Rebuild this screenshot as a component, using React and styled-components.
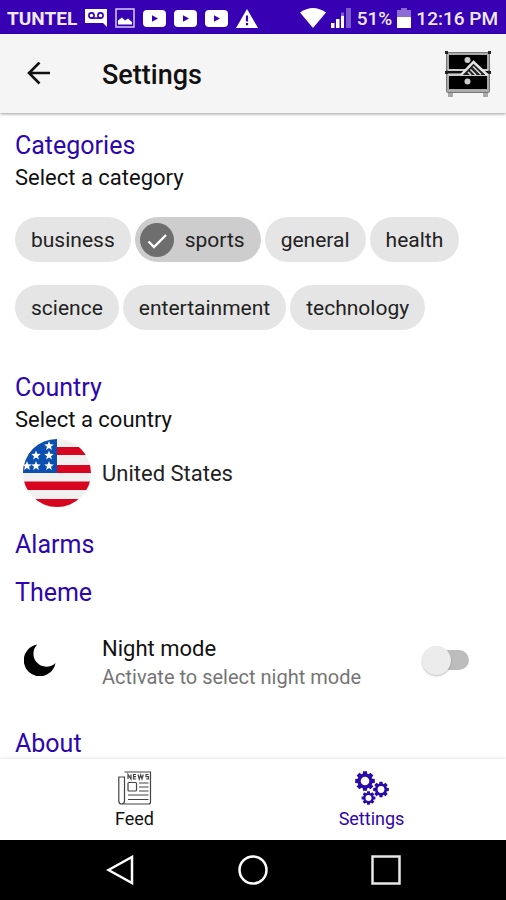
import React, { useState } from "react";
import styled, { createGlobalStyle } from "styled-components";

const primary = "#3700b3";
const accent = "#2d06b0";

const GlobalStyle = createGlobalStyle`
  * {
    box-sizing: border-box;
  }

  body {
    margin: 0;
    background-color: white;
    color: #111;
    font-family: Roboto, "Liberation Sans", sans-serif;
  }

  button {
    font-family: inherit;
  }

  svg {
    display: block;
    flex-shrink: 0;
  }
`;

const Screen = styled.div`
  display: flex;
  flex-direction: column;
  height: 100vh;
`;

const StatusBar = styled.div`
  display: flex;
  align-items: center;
  justify-content: space-between;
  height: 34px;
  flex-shrink: 0;
  padding: 2px 8px 0 7px;
  background-color: ${primary};
  color: #eee8fa;
  font-size: 19px;
  font-weight: 500;
`;

const StatusGroup = styled.div`
  display: flex;
  align-items: center;
  gap: ${(props) => props.$gap}px;
`;

const Carrier = styled.span`
  font-weight: 700;
`;

const AppBar = styled.header`
  display: flex;
  align-items: center;
  height: 79px;
  flex-shrink: 0;
  padding: 0 15px 0 22px;
  background-color: #f5f5f5;
  box-shadow: 0 1px 3px rgba(0, 0, 0, 0.4);
  z-index: 1;
`;

const IconButton = styled.button`
  display: flex;
  align-items: center;
  justify-content: center;
  width: 34px;
  height: 34px;
  padding: 0;
  border: none;
  background: none;
  cursor: pointer;
`;

const Title = styled.h1`
  flex: 1;
  margin: 0 0 0 46px;
  padding-top: 2px;
  font-size: 27px;
  line-height: 32px;
  font-weight: 500;
`;

const Main = styled.main`
  flex: 1;
  min-height: 0;
  overflow: hidden;
  padding: 17px 15px 0;
`;

const Section = styled.section`
  margin-bottom: ${(props) => props.$space}px;
`;

const Heading = styled.h2`
  margin: 0;
  color: ${accent};
  font-size: 25px;
  line-height: 32px;
  font-weight: 400;
`;

const Hint = styled.p`
  margin: 0;
  font-size: 22px;
  line-height: 32px;
`;

const Chips = styled.div`
  display: flex;
  flex-wrap: wrap;
  gap: 23px 4px;
  margin-top: 23px;
`;

const Chip = styled.button`
  display: flex;
  align-items: center;
  gap: 11px;
  height: 45px;
  padding: 0 16px 0 ${(props) => (props.$selected ? 5 : 16)}px;
  border: none;
  border-radius: 23px;
  background-color: ${(props) => (props.$selected ? "#cdcdcd" : "#e5e5e5")};
  color: #222;
  font-size: 21px;
  cursor: pointer;
`;

const CountryRow = styled.button`
  display: flex;
  align-items: center;
  gap: 11px;
  width: 100%;
  margin-top: 3px;
  padding: 0 8px;
  border: none;
  background: none;
  color: #222;
  font-size: 22px;
  text-align: left;
  cursor: pointer;
`;

const SettingRow = styled.div`
  display: flex;
  align-items: center;
  margin-top: 20px;
  padding: 0 22px 0 9px;
`;

const SettingLabel = styled.label`
  flex: 1;
  margin-left: 46px;
  padding-top: 6px;
  font-size: 22px;
  line-height: 28px;
`;

const SettingDetail = styled.span`
  display: block;
  color: #757575;
  font-size: 20px;
  line-height: 28px;
`;

const Switch = styled.input`
  appearance: none;
  display: flex;
  align-items: center;
  width: 47px;
  height: 30px;
  margin: 0;
  cursor: pointer;

  &::before {
    content: "";
    width: 29px;
    height: 29px;
    border-radius: 50%;
    background-color: #ececec;
    box-shadow: 0 1px 2px rgba(0, 0, 0, 0.25);
    z-index: 1;
  }

  &::after {
    content: "";
    width: 42px;
    height: 20px;
    margin-left: -24px;
    border-radius: 10px;
    background-color: #bdbdbd;
  }

  &:checked::before {
    order: 1;
    margin-left: -24px;
    background-color: ${primary};
  }

  &:checked::after {
    margin-left: 0;
  }
`;

const Tabs = styled.nav`
  display: flex;
  flex-shrink: 0;
  height: 81px;
  padding: 12px 16px 0;
  background-color: white;
  box-shadow: 0 -1px 3px rgba(0, 0, 0, 0.1);
  z-index: 1;
`;

const Tab = styled.a`
  display: flex;
  flex: 1;
  flex-direction: column;
  align-items: center;
  gap: 2px;
  color: ${(props) => (props.$active ? accent : "#111")};
  font-size: 18px;
  line-height: 24px;
  text-decoration: none;
`;

const SystemBar = styled.div`
  display: flex;
  align-items: center;
  justify-content: space-around;
  flex-shrink: 0;
  height: 60px;
  padding: 0 53px;
  background-color: black;
`;

const VoicemailIcon = () => (
  <svg width="22" height="18" viewBox="0 0 22 18">
    <path d="M0 0h22v18l-4-4H0z" fill="white" />
    <g fill="none" stroke={primary} strokeWidth="1.6">
      <circle cx="6.5" cy="6.5" r="2.6" />
      <circle cx="15.5" cy="6.5" r="2.6" />
      <path d="M6.5 9.1h9" />
    </g>
  </svg>
);

const PictureIcon = () => (
  <svg width="20" height="20" viewBox="0 0 20 20">
    <rect x="1" y="1" width="18" height="18" fill="none" stroke="#d9cdf2" strokeWidth="1.5" />
    <path d="M3 16.5v-4l4-3 3 3 3-2 4 3.5v2.5z" fill="white" />
  </svg>
);

const VideoIcon = () => (
  <svg width="23" height="17" viewBox="0 0 23 17">
    <rect width="23" height="17" rx="4" fill="white" />
    <path d="M9 5.2l6 3.3-6 3.3z" fill={primary} />
  </svg>
);

const WarningIcon = () => (
  <svg width="22" height="19" viewBox="0 0 22 19">
    <path d="M11 0l11 19H0z" fill="white" />
    <path d="M9.900 6.500h2.200v6H9.900zM9.900 14h2.200v2.300H9.900z" fill={primary} />
  </svg>
);

const WifiIcon = () => (
  <svg width="26" height="20" viewBox="0 0 26 20">
    <path d="M0 4.500Q13-4.500 26 4.500L13 20z" fill="white" />
  </svg>
);

const SignalIcon = () => (
  <svg width="21" height="20" viewBox="0 0 21 20">
    <path d="M0 15h3.500v5H0zM5 11h3.500v9H5zM10 7.500h3v12.500h-3z" fill="white" />
    <path d="M10 4.500h3v3h-3zM15 0h5v20h-5z" fill="#7d5acb" />
  </svg>
);

const BatteryIcon = () => (
  <svg width="14" height="20" viewBox="0 0 14 20">
    <path d="M4 0h6v2h4v7H0V2h4z" fill="#8c6bd2" />
    <path d="M0 9h14v11H0z" fill="white" />
  </svg>
);

const BackArrow = () => (
  <svg width="24" height="24" viewBox="0 0 24 24" fill="none" stroke="#111" strokeWidth="2.6">
    <path d="M23 11H2M12.500 .5L2 11l10.500 10.500" />
  </svg>
);

const DrawerLogo = () => (
  <svg width="46" height="46" viewBox="0 0 46 46">
    <path d="M3 41h5v5H3zM38 41h5v5h-5z" fill="#aaa" />
    <rect x="1.500" y="1.500" width="43" height="40" rx="1" fill="#aaa" stroke="#777" />
    <path d="M4 4h38v14H4zM4 25h38v13H4z" fill="black" />
    <path d="M1 21h44" stroke="#111" strokeWidth="2.500" />
    <path d="M3 19h40M3 24h40" stroke="#ccc" strokeWidth="2" />
    <path d="M0 0h3v3H0zM43 0h3v3h-3zM0 20h3v3H0zM43 20h3v3h-3z" fill="#222" />
    <path d="M16 24L28.500 11 41 24z" fill="#222" />
    <path d="M16 24L28.500 11 43 24.500" fill="none" stroke="#e6e6e6" strokeWidth="2.500" />
    <path d="M23 21l3 3M25.500 18.500l5.500 5.500M28 15.500l8 8" stroke="#ddd" strokeWidth="1.500" />
    <circle cx="22.500" cy="9" r="3" fill="#ccc" />
    <circle cx="22.500" cy="30.500" r="3" fill="#ccc" />
  </svg>
);

const CheckIcon = () => (
  <svg width="34" height="34" viewBox="0 0 34 34">
    <circle cx="17" cy="17" r="17" fill="#6e6e6e" />
    <path d="M8.500 18.500l5.500 5.500L26 12" fill="none" stroke="white" strokeWidth="2.400" />
  </svg>
);

const stars = [
  [26, 7],
  [13, 16.5],
  [26, 16.5],
  [4, 27],
  [13, 27],
  [26, 27],
];

const starPoints = (cx, cy) =>
  Array.from({ length: 10 }, (_, i) => {
    const r = i % 2 ? 2.1 : 5;
    const a = (Math.PI / 5) * i - Math.PI / 2;
    return `${cx + r * Math.cos(a)},${cy + r * Math.sin(a)}`;
  }).join(" ");

const Flag = () => (
  <svg width="68" height="68" viewBox="0 0 68 68">
    <clipPath id="flag">
      <circle cx="34" cy="34" r="34" />
    </clipPath>
    <g clipPath="url(#flag)">
      <path d="M0 0h68v68H0z" fill="#f0f0f0" />
      <path d="M0 8h68v8H0zM0 26h68v8H0zM0 42.500h68V51H0zM0 60h68v8H0z" fill="#d80520" />
      <path d="M0 0h34v34H0z" fill="#0b50b0" />
      {stars.map(([x, y]) => (
        <polygon key={`${x}-${y}`} points={starPoints(x, y)} fill="white" />
      ))}
    </g>
  </svg>
);

const MoonIcon = () => (
  <svg width="32" height="32" viewBox="0 0 32 32">
    <path d="M13.300 .5A16 16 0 1 0 31.500 19A12.900 12.900 0 0 1 13.300 .5z" fill="black" />
  </svg>
);

const NewsIcon = () => (
  <svg width="34" height="34" viewBox="0 0 34 34" fill="none" stroke="#444" strokeWidth="1.2">
    <path d="M6.500 1h26v30q0 2-2 2H3.500Q.8 33 .8 30V6h5.700v24q0 3-3 3" />
    <path d="M10 8V3.500l3 4.500V3.500M18 3.500h-2.500V8H18M15.500 5.700H18M20 3.500l1.300 4.500 1.400-4 1.300 4 1.300-4.500M30.500 3.500h-2.500v2.200h2.500V8H28" />
    <rect x="10" y="11.500" width="8.500" height="8.500" rx="1" />
    <path d="M21 12h9.500M21 16h9.500M21 20h9.500M10 24h20.500M10 28.500h20.500" />
  </svg>
);

const gearPath = (cx, cy, r, hole) => {
  const points = [];
  for (let i = 0; i < 8; i++) {
    [
      [-0.3, 0.76],
      [-0.2, 1],
      [0.2, 1],
      [0.3, 0.76],
    ].forEach(([offset, k]) => {
      const a = (Math.PI / 4) * i + offset;
      points.push(`${cx + r * k * Math.cos(a)} ${cy + r * k * Math.sin(a)}`);
    });
  }
  return `M${points.join("L")}ZM${cx - hole} ${cy}a${hole} ${hole} 0 1 0 ${hole * 2} 0a${hole} ${hole} 0 1 0 ${-hole * 2} 0z`;
};

const GearsIcon = () => (
  <svg width="34" height="34" viewBox="0 0 34 34" fill="#2a0aa8" fillRule="evenodd">
    <path d={gearPath(10, 10, 10, 4.3)} />
    <path d={gearPath(26, 18.5, 8, 3.4)} />
    <path d={gearPath(13.5, 27, 7, 3)} />
  </svg>
);

const categories = [
  "business",
  "sports",
  "general",
  "health",
  "science",
  "entertainment",
  "technology",
];

const App = () => {
  const [category, setCategory] = useState("sports");
  const [night, setNight] = useState(false);

  return (
    <Screen>
      <GlobalStyle />
      <StatusBar>
        <StatusGroup $gap={8}>
          <Carrier>TUNTEL</Carrier>
          <VoicemailIcon />
          <PictureIcon />
          <VideoIcon />
          <VideoIcon />
          <VideoIcon />
          <WarningIcon />
        </StatusGroup>
        <StatusGroup $gap={5}>
          <WifiIcon />
          <SignalIcon />
          <span>51%</span>
          <BatteryIcon />
          <span>12:16 PM</span>
        </StatusGroup>
      </StatusBar>

      <AppBar>
        <IconButton aria-label="Back">
          <BackArrow />
        </IconButton>
        <Title>Settings</Title>
        <DrawerLogo />
      </AppBar>

      <Main>
        <Section $space={42}>
          <Heading>Categories</Heading>
          <Hint>Select a category</Hint>
          <Chips>
            {categories.map((name) => (
              <Chip
                key={name}
                $selected={name === category}
                aria-pressed={name === category}
                onClick={() => setCategory(name)}
              >
                {name === category && <CheckIcon />}
                {name}
              </Chip>
            ))}
          </Chips>
        </Section>

        <Section $space={22}>
          <Heading>Country</Heading>
          <Hint>Select a country</Hint>
          <CountryRow>
            <Flag />
            United States
          </CountryRow>
        </Section>

        <Section $space={16}>
          <Heading>Alarms</Heading>
        </Section>

        <Section $space={37}>
          <Heading>Theme</Heading>
          <SettingRow>
            <MoonIcon />
            <SettingLabel htmlFor="night">
              Night mode
              <SettingDetail>Activate to select night mode</SettingDetail>
            </SettingLabel>
            <Switch
              id="night"
              type="checkbox"
              role="switch"
              checked={night}
              onChange={(e) => setNight(e.target.checked)}
            />
          </SettingRow>
        </Section>

        <Section $space={16}>
          <Heading>About</Heading>
        </Section>
      </Main>

      <Tabs>
        <Tab href="#feed">
          <NewsIcon />
          Feed
        </Tab>
        <Tab href="#settings" $active>
          <GearsIcon />
          Settings
        </Tab>
      </Tabs>

      <SystemBar>
        <IconButton aria-label="System back">
          <svg width="28" height="30" viewBox="0 0 28 30" fill="none" stroke="white" strokeWidth="2.5">
            <path d="M2.500 15L26 2v26z" />
          </svg>
        </IconButton>
        <IconButton aria-label="Home">
          <svg width="30" height="30" viewBox="0 0 30 30" fill="none" stroke="white" strokeWidth="2.5">
            <circle cx="15" cy="15" r="13.5" />
          </svg>
        </IconButton>
        <IconButton aria-label="Recent apps">
          <svg width="30" height="30" viewBox="0 0 30 30" fill="none" stroke="#e8e8e8" strokeWidth="2.5">
            <rect x="1.5" y="1.5" width="27" height="27" />
          </svg>
        </IconButton>
      </SystemBar>
    </Screen>
  );
};

export default App;
